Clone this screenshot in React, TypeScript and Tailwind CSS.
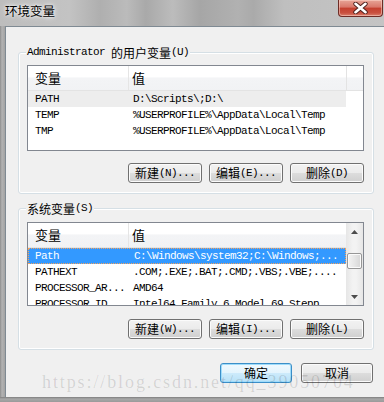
import type { ReactNode } from "react";
import clsx from "clsx";

const MONO = "font-['Liberation_Mono','Noto_Sans_CJK_SC',monospace] text-[11px] tracking-[-0.6px]";
const CJK = "font-['Noto_Sans_CJK_SC',sans-serif] tracking-normal";

type Row = { name: string; value: string; state?: "hover" | "selected" };

const userVars: Row[] = [
  { name: "PATH", value: "D:\\Scripts\\;D:\\", state: "hover" },
  { name: "TEMP", value: "%USERPROFILE%\\AppData\\Local\\Temp" },
  { name: "TMP", value: "%USERPROFILE%\\AppData\\Local\\Temp" },
];

const systemVars: Row[] = [
  { name: "Path", value: "C:\\Windows\\system32;C:\\Windows;...", state: "selected" },
  { name: "PATHEXT", value: ".COM;.EXE;.BAT;.CMD;.VBS;.VBE;...." },
  { name: "PROCESSOR_AR...", value: "AMD64" },
  { name: "PROCESSOR_ID...", value: "Intel64 Family 6 Model 69 Stepp" },
];

function Arrow({ up }: { up?: boolean }) {
  return (
    <svg width="7" height="4" viewBox="0 0 7 4">
      <path d={up ? "M0 4 L3.5 0 L7 4 Z" : "M0 0 L3.5 4 L7 0 Z"} fill="#4d4d4d" />
    </svg>
  );
}

function Scrollbar() {
  return (
    <div className="flex w-[17px] flex-col bg-[linear-gradient(90deg,#e6e6e6,#f3f3f3_40%,#f3f3f3_60%,#e6e6e6)]">
      <div className="flex h-[17px] items-center justify-center">
        <Arrow up />
      </div>
      <div className="flex-1">
        <div className="mx-[1px] mt-[13px] h-[16px] rounded-[2px] border border-[#979797] bg-[linear-gradient(90deg,#f4f4f4,#e6e6e6_50%,#d6d6d6)] shadow-[inset_0_0_0_1px_#fbfbfb]" />
      </div>
      <div className="flex h-[17px] items-center justify-center">
        <Arrow />
      </div>
    </div>
  );
}

function VarList({ rows, scroll, className }: { rows: Row[]; scroll?: boolean; className?: string }) {
  const header = "bg-[linear-gradient(#ffffff_0%,#ffffff_45%,#f3f4f6_50%,#f1f2f4_100%)]";
  return (
    <div className={clsx("flex overflow-hidden border border-[#828790] bg-white", className)}>
      <div className="flex w-[318px] flex-col">
        <div className={clsx("flex h-[25px] shrink-0 border-b border-[#e3e3e3] text-[13px] text-black", header, CJK)}>
          <div className="flex w-[101px] items-center border-r border-[#e5e5e5] pl-[7px]">变量</div>
          <div className="flex flex-1 items-center pl-[3px]">值</div>
        </div>
        {rows.map((r) => (
          <div
            key={r.name}
            className={clsx(
              "flex h-[16px] shrink-0 items-center whitespace-nowrap",
              MONO,
              r.state === "hover" && "bg-[#ededed] text-black",
              r.state === "selected" && "border border-dotted border-[#f7a35c] bg-[#3399ff] text-white",
              !r.state && "text-black",
            )}
          >
            <div className={clsx("w-[101px] overflow-hidden", r.state === "selected" ? "pl-[6px]" : "pl-[7px]")}>{r.name}</div>
            <div className="flex-1 overflow-hidden pl-[4px]">{r.value}</div>
          </div>
        ))}
      </div>
      {scroll ? (
        <Scrollbar />
      ) : (
        <div className="w-[17px]">
          <div className={clsx("h-[25px] border-b border-l border-[#e3e3e3]", header)} />
        </div>
      )}
    </div>
  );
}

function Btn({ children, primary, className }: { children: ReactNode; primary?: boolean; className?: string }) {
  return (
    <button
      className={clsx(
        "flex h-[20px] items-center justify-center rounded-[3px] border text-black",
        primary
          ? "border-[#3c8fc8] bg-[linear-gradient(#f0f9fe_0%,#e3f4fd_50%,#cdebfb_50%,#b8e1f7_100%)] shadow-[inset_0_0_0_1px_#9fdcfb]"
          : "border-[#707070] bg-[linear-gradient(#f2f2f2_0%,#ebebeb_50%,#dddddd_50%,#cfcfcf_100%)] shadow-[inset_0_0_0_1px_#fbfbfb]",
        className,
      )}
    >
      {children}
    </button>
  );
}

function BtnLabel({ cn, key1, dots }: { cn: string; key1: string; dots?: boolean }) {
  return (
    <span className="flex items-center">
      <span className={clsx(CJK, "text-[12px] leading-none")}>{cn}</span>
      <span className={clsx(MONO, "leading-none")}>({key1}){dots ? "..." : ""}</span>
    </span>
  );
}

function GroupBox({ label, children, className }: { label: ReactNode; children: ReactNode; className?: string }) {
  return (
    <div className={clsx("relative w-[356px] rounded-[3px] border border-[#d5dfe5] pb-[10px] pl-[8px] pr-[9px] shadow-[inset_0_0_0_1px_#ffffff]", className)}>
      <div className="absolute -top-[7px] left-[7px] flex h-[13px] items-center bg-[#f0f0f0] px-[1px] text-black">{label}</div>
      {children}
    </div>
  );
}

export default function App() {
  return (
    <div className="relative flex h-[402px] w-[384px] flex-col overflow-hidden bg-[#b4b4b4]">
      {/* aero title bar */}
      <div className="flex h-[26px] shrink-0 bg-[linear-gradient(90deg,#bdbdbd_0%,#c3c3c3_18%,#afafaf_26%,#bbbbbb_33%,#a9a9a9_38%,#bcbcbc_45%,#a6a6a6_52%,#b1b1b1_62%,#aaaaaa_66%,#bfbfbf_74%,#c4c4c4_100%)]">
        <div className={clsx(CJK, "pl-[5px] pt-[3px] text-[12.5px] leading-[16px] text-black [text-shadow:0_0_6px_#ffffff,0_0_3px_#ffffff]")}>
          环境变量
        </div>
        <div className="ml-auto mr-[1px] flex h-[17px] w-[45px] items-center justify-center rounded-b-[4px] border border-t-0 border-[#6e2c26] bg-[linear-gradient(#e7a597_0%,#d9776a_45%,#c4402f_50%,#c9503f_80%,#d9806e_100%)] shadow-[inset_0_0_0_1px_rgba(255,220,210,0.5)]">
          <svg width="15" height="12" viewBox="0 0 15 12">
            <path d="M2.5 1.8 L12.5 10.2 M12.5 1.8 L2.5 10.2" stroke="#4a1e1a" strokeWidth="4.4" strokeLinecap="round" />
            <path d="M2.5 1.8 L12.5 10.2 M12.5 1.8 L2.5 10.2" stroke="#ffffff" strokeWidth="2.6" strokeLinecap="round" />
          </svg>
        </div>
      </div>

      <div className="flex flex-1 flex-col bg-[linear-gradient(90deg,#8d8d8d_0px,#b3b3b3_2px,#a3a3a3_5px)] pl-[5px]">
        <div className="flex flex-1 flex-col border-l border-t border-[#7f8a93] bg-[#f0f0f0]">
          <GroupBox
            className="ml-[12px] mt-[25px] pt-[12px]"
            label={
              <>
                <span className={clsx(MONO, "mr-[6px]")}>Administrator</span>
                <span className={clsx(CJK, "text-[12px]")}>的用户变量</span>
                <span className={MONO}>(U)</span>
              </>
            }
          >
            <VarList rows={userVars} className="h-[86px]" />
            <div className="mt-[12px] flex justify-end gap-[7px]">
              <Btn className="w-[74px]"><BtnLabel cn="新建" key1="N" dots /></Btn>
              <Btn className="w-[74px]"><BtnLabel cn="编辑" key1="E" dots /></Btn>
              <Btn className="w-[74px]"><BtnLabel cn="删除" key1="D" /></Btn>
            </div>
          </GroupBox>

          <GroupBox
            className="ml-[12px] mt-[14px] pt-[13px]"
            label={
              <>
                <span className={clsx(CJK, "text-[12px]")}>系统变量</span>
                <span className={MONO}>(S)</span>
              </>
            }
          >
            <VarList rows={systemVars} scroll className="h-[84px]" />
            <div className="mt-[13px] flex justify-end gap-[7px]">
              <Btn className="w-[74px]"><BtnLabel cn="新建" key1="W" dots /></Btn>
              <Btn className="w-[74px]"><BtnLabel cn="编辑" key1="I" dots /></Btn>
              <Btn className="w-[74px]"><BtnLabel cn="删除" key1="L" /></Btn>
            </div>
          </GroupBox>

          <div className="ml-[214px] mt-[13px] flex gap-[9px]">
            <Btn primary className="w-[72px]">
              <span className={clsx(CJK, "text-[12px] leading-none")}>确定</span>
            </Btn>
            <Btn className="w-[72px]">
              <span className={clsx(CJK, "text-[12px] leading-none")}>取消</span>
            </Btn>
          </div>
        </div>
      </div>
      <div className="h-[5px] shrink-0 bg-[linear-gradient(#7e7e7e,#a8a8a8_40%,#9a9a9a)]" />

      {/* watermark */}
      <div className="pointer-events-none absolute left-[42px] top-[369px] whitespace-nowrap font-['Liberation_Serif',serif] text-[18px] tracking-[1.9px] text-[rgba(0,0,0,0.13)]">
        https://blog.csdn.net/qq_39050704
      </div>
    </div>
  );
}
